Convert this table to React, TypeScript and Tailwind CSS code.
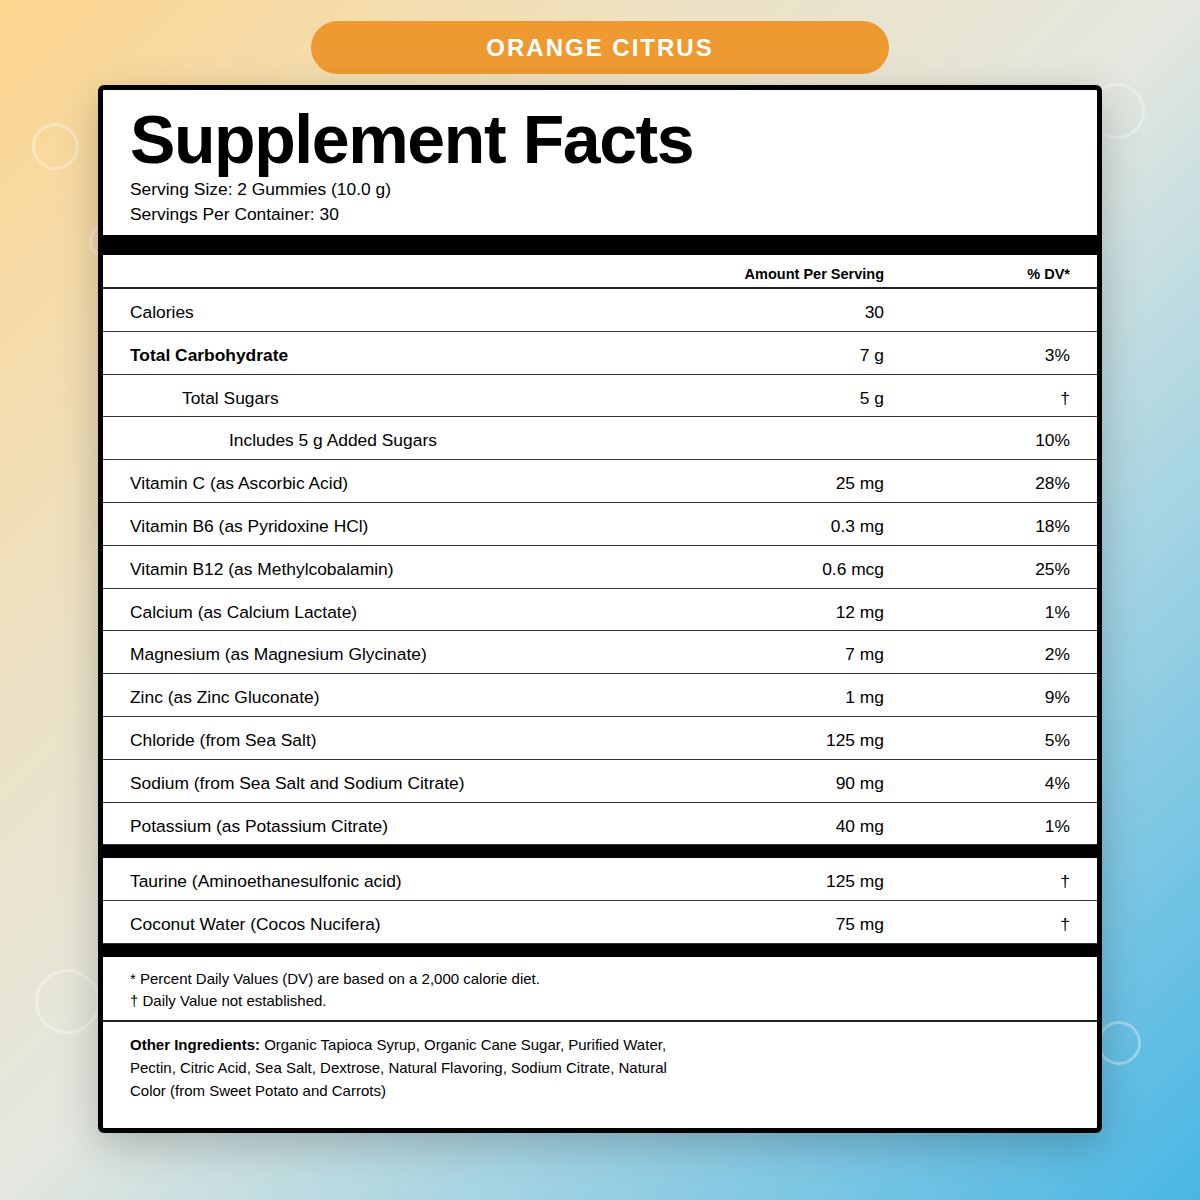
import React from "react";

type Row = { name: string; amt: string; dv: string; bold?: boolean; indent?: number };

const rows: Row[] = [
  { name: "Calories", amt: "30", dv: "" },
  { name: "Total Carbohydrate", amt: "7 g", dv: "3%", bold: true },
  { name: "Total Sugars", amt: "5 g", dv: "†", indent: 1 },
  { name: "Includes 5 g Added Sugars", amt: "", dv: "10%", indent: 2 },
  { name: "Vitamin C (as Ascorbic Acid)", amt: "25 mg", dv: "28%" },
  { name: "Vitamin B6 (as Pyridoxine HCl)", amt: "0.3 mg", dv: "18%" },
  { name: "Vitamin B12 (as Methylcobalamin)", amt: "0.6 mcg", dv: "25%" },
  { name: "Calcium (as Calcium Lactate)", amt: "12 mg", dv: "1%" },
  { name: "Magnesium (as Magnesium Glycinate)", amt: "7 mg", dv: "2%" },
  { name: "Zinc (as Zinc Gluconate)", amt: "1 mg", dv: "9%" },
  { name: "Chloride (from Sea Salt)", amt: "125 mg", dv: "5%" },
  { name: "Sodium (from Sea Salt and Sodium Citrate)", amt: "90 mg", dv: "4%" },
  { name: "Potassium (as Potassium Citrate)", amt: "40 mg", dv: "1%" },
];

const extras: Row[] = [
  { name: "Taurine (Aminoethanesulfonic acid)", amt: "125 mg", dv: "†" },
  { name: "Coconut Water (Cocos Nucifera)", amt: "75 mg", dv: "†" },
];

function FactRow({ r }: { r: Row }) {
  const indentCls = r.indent === 1 ? "pl-[52px]" : r.indent === 2 ? "pl-[99px]" : "";
  return (
    <div className="flex items-start border-b border-[#333] pl-[27px] pr-[27px] pt-[13px] pb-[8.8px] text-[17.4px] leading-[20px] text-black">
      <div className={`flex-1 ${indentCls} ${r.bold ? "font-bold" : ""}`}>{r.name}</div>
      <div className="w-[200px] text-right">{r.amt}</div>
      <div className="w-[186px] text-right">{r.dv}</div>
    </div>
  );
}

function Ring({ cls }: { cls: string }) {
  return <div className={`absolute rounded-full border-[3px] border-white/35 ${cls}`} />;
}

export default function App() {
  return (
    <div
      className="relative h-[1200px] w-full overflow-hidden bg-[linear-gradient(135deg,#fed58e_0%,#ece2c6_30%,#e3e7df_50%,#9fd2e3_72%,#48b6e4_100%)]"
      style={{ fontFamily: '"Liberation Sans", Arial, Helvetica, sans-serif' }}
    >
      <Ring cls="left-[32px] top-[123px] h-[47px] w-[47px]" />
      <Ring cls="left-[89px] top-[222px] h-[38px] w-[38px]" />
      <Ring cls="left-[1089px] top-[83px] h-[56px] w-[56px]" />
      <Ring cls="left-[35px] top-[969px] h-[65px] w-[65px]" />
      <Ring cls="left-[1097px] top-[1021px] h-[44px] w-[44px]" />

      <div className="relative flex flex-col items-center pt-[21px]">
        <div className="flex h-[53px] w-[578px] items-center justify-center rounded-full bg-[#ef9a31] text-[24px] font-bold tracking-[2px] text-white">
          ORANGE CITRUS
        </div>

        <div className="mt-[11px] w-[1004px] overflow-hidden rounded-[6px] border-[5px] border-black bg-white shadow-[0_12px_40px_rgba(0,0,0,0.22)]">
          <div className="px-[27px] pt-[15px] pb-[8px]">
            <div className="text-[68px] font-bold leading-none tracking-[-1.4px] text-black">Supplement Facts</div>
            <div className="mt-[4px] text-[17.4px] leading-[25px] text-black">
              <div>Serving Size: 2 Gummies (10.0 g)</div>
              <div>Servings Per Container: 30</div>
            </div>
          </div>

          <div className="h-[20px] bg-black" />

          <div className="flex border-b-2 border-[#222] px-[27px] pt-[10px] pb-[4px] text-[14.5px] font-bold leading-[18px] text-black">
            <div className="flex-1" />
            <div className="w-[200px] text-right">Amount Per Serving</div>
            <div className="w-[186px] text-right">% DV*</div>
          </div>

          {rows.map((r) => (
            <FactRow key={r.name} r={r} />
          ))}

          <div className="h-[13px] bg-black" />

          {extras.map((r) => (
            <FactRow key={r.name} r={r} />
          ))}

          <div className="h-[13.5px] bg-black" />

          <div className="border-b-2 border-[#222] px-[27px] pt-[11px] pb-[8px] text-[15px] leading-[22px] text-black">
            <div>* Percent Daily Values (DV) are based on a 2,000 calorie diet.</div>
            <div>† Daily Value not established.</div>
          </div>

          <div className="px-[27px] pt-[11px] pb-[26px] text-[15px] leading-[23px] text-black">
            <div className="max-w-[560px]">
              <span className="font-bold">Other Ingredients:</span> Organic Tapioca Syrup, Organic Cane Sugar, Purified
              Water, Pectin, Citric Acid, Sea Salt, Dextrose, Natural Flavoring, Sodium Citrate, Natural Color (from
              Sweet Potato and Carrots)
            </div>
          </div>
        </div>
      </div>
    </div>
  );
}
